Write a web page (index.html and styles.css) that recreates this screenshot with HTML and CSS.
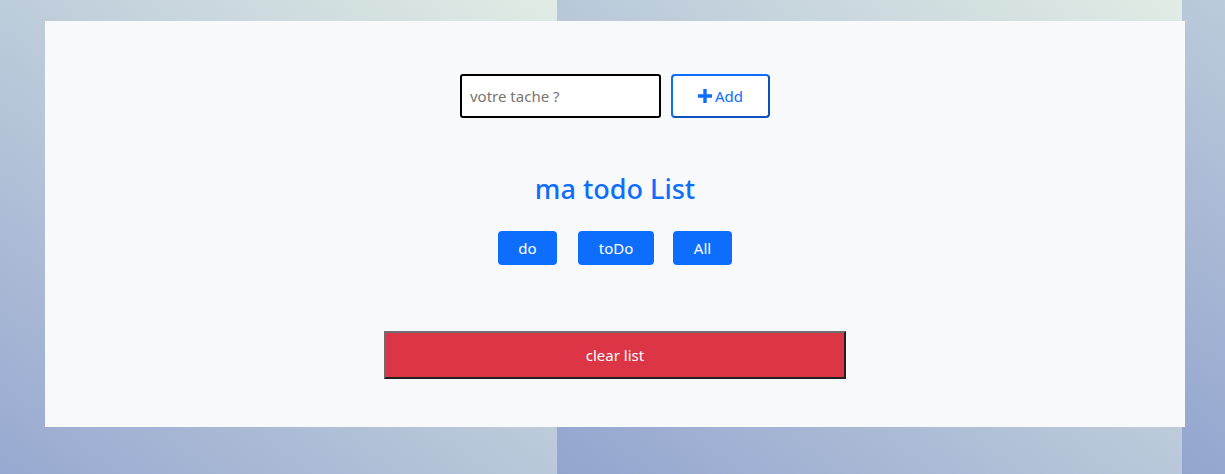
FILE: index.html
```html
<!DOCTYPE html>
<html lang="fr">
<head>
<meta charset="utf-8">
<title>ma todo List</title>
<link rel="stylesheet" href="styles.css">
</head>
<body>
<main class="card">
  <form class="add-form">
    <input class="task-input" type="text" placeholder="votre tache ?">
    <button class="add-btn" type="button"><svg class="plus" viewBox="0 0 14 14" width="14" height="14"><path d="M5.3 0h3.4v5.3H14v3.4H8.7V14H5.3V8.7H0V5.3h5.3z" fill="currentColor"/></svg>Add</button>
  </form>
  <h3 class="title">ma todo List</h3>
  <div class="filters">
    <button class="filter" type="button">do</button>
    <button class="filter todo" type="button">toDo</button>
    <button class="filter" type="button">All</button>
  </div>
  <button class="clear-btn" type="button">clear list</button>
</main>
</body>
</html>
```
FILE: styles.css
```css
html, body {
  margin: 0;
  height: 100%;
}
body {
  font-family: "Noto Sans", "Open Sans", sans-serif;
  background-image: linear-gradient(to top right, #93a5cf, #e0ece4);
  background-size: 625px 100%;
  background-position: -68px 0;
  background-repeat: repeat-x;
  padding-top: 21px;
  box-sizing: border-box;
}
.card {
  margin: 0 40px 0 45px;
  height: 406px;
  background: #f8f9fa;
  box-sizing: border-box;
  padding-top: 53px;
  display: flex;
  flex-direction: column;
  align-items: center;
}
.add-form {
  display: flex;
  gap: 10px;
}
.task-input {
  width: 201px;
  height: 44px;
  box-sizing: border-box;
  border: 2px solid #000;
  border-radius: 3px;
  padding: 0 8px;
  font-family: inherit;
  font-size: 15px;
  background: #fff;
}
.task-input::placeholder {
  color: #7a7470;
}
.add-btn {
  width: 99px;
  height: 44px;
  box-sizing: border-box;
  border: 2px solid;
  border-color: #0d6efd #0a53be #0a53be #0d6efd;
  border-radius: 4px;
  background: #fff;
  color: #0d6efd;
  font-family: inherit;
  font-size: 15px;
  display: flex;
  align-items: center;
  justify-content: center;
  gap: 3px;
  padding: 0;
}
.plus {
  display: block;
}
.title {
  margin: 54px 0 0;
  font-size: 27px;
  font-weight: 500;
  line-height: 34px;
  color: #0d6efd;
}
.filters {
  display: flex;
  gap: 20px;
  margin-top: 25px;
}
.filter {
  height: 34px;
  width: 59px;
  border: none;
  border-radius: 4px;
  background: #0d6efd;
  color: #fff;
  font-family: inherit;
  font-size: 15px;
  padding: 0;
}
.filter.todo {
  width: 76px;
  margin-left: 1px;
  margin-right: -1px;
}
.clear-btn {
  margin-top: 66px;
  width: 462px;
  height: 48px;
  box-sizing: border-box;
  border: 2px solid;
  border-color: #6e6e6e #212121 #212121 #6e6e6e;
  background: #dc3545;
  color: #fff;
  font-family: inherit;
  font-size: 15px;
  padding: 0;
}
```
